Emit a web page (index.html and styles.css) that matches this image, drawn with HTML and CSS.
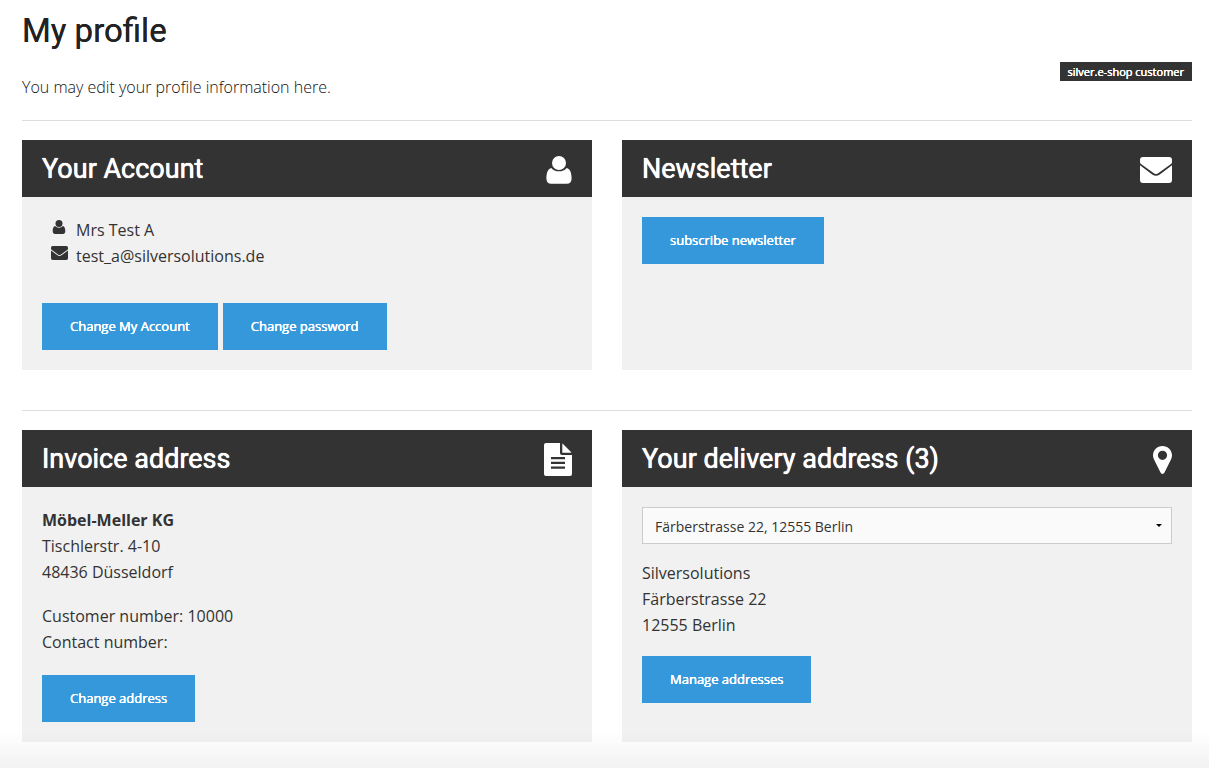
FILE: index.html
```html
<!DOCTYPE html>
<html lang="en">
<head>
<meta charset="utf-8">
<title>My profile</title>
<meta name="viewport" content="width=device-width, initial-scale=1">
<link rel="stylesheet" href="styles.css">
</head>
<body>
<svg class="sprite" aria-hidden="true">
  <symbol id="user" viewBox="0 0 26 28">
    <circle cx="13" cy="7" r="7"/>
    <path d="M5.3 11.9C7 14 9.800 15.300 13 15.300S19 14 20.700 11.900C24.200 12.600 25.600 17 25.600 22.500C25.600 25.800 23.800 27.800 20.800 27.800H5.200C2.200 27.800.4 25.800.4 22.500C.4 17 1.800 12.600 5.300 11.900Z"/>
  </symbol>
  <symbol id="envelope" viewBox="0 0 32 26">
    <path d="M3 0H29Q32 0 32 3V5.200C32 5.900 31.500 6.500 31 6.900L18.800 15.800C16.800 17.400 15.200 17.400 13.200 15.800L1 6.900C.5 6.500 0 5.900 0 5.200V3Q0 0 3 0Z"/>
    <path d="M0 8.300L12.200 17.400C14.800 19.300 17.200 19.300 19.800 17.400L32 8.300V23Q32 26 29 26H3Q0 26 0 23Z"/>
  </symbol>
  <symbol id="file" viewBox="0 0 28 33">
    <path fill-rule="evenodd" d="M2 0H16V10Q16 12 18 12H28V31Q28 33 26 33H2Q0 33 0 31V2Q0 0 2 0ZM7 14V16.200H21V14ZM7 18.700V20.900H21V18.700ZM7 23.500V25.700H21V23.500Z"/>
    <path d="M18.300 .6Q19 .9 19.500 1.400L26.500 8.400Q27 9 27.400 9.700H18.300Z"/>
  </symbol>
  <symbol id="marker" viewBox="0 0 19 28">
    <path fill-rule="evenodd" d="M9.500 0C14.800 0 19 4.200 19 9.300C19 10.800 18.700 12.100 18.100 13.300L11.500 26.600C10.700 28.300 8.300 28.300 7.500 26.600L.9 13.300C.3 12.100 0 10.800 0 9.300C0 4.200 4.200 0 9.500 0ZM9.500 4.700A4.600 4.600 0 1 0 9.500 13.900A4.600 4.600 0 1 0 9.500 4.700Z"/>
  </symbol>
</svg>

<main class="page">
  <header class="intro">
    <div>
      <h1 class="title">My profile</h1>
      <p class="lead">You may edit your profile information here.</p>
    </div>
    <span class="label">silver.e-shop customer</span>
  </header>

  <div class="row">
    <section class="panel">
      <header class="panel-head">
        <h2 class="panel-title">Your Account</h2>
        <svg class="icon-user" aria-hidden="true"><use href="#user"/></svg>
      </header>
      <div class="panel-body">
        <ul class="contact">
          <li class="contact-item"><svg class="contact-icon" viewBox="0 0 17 14" aria-hidden="true"><use href="#user" x="1" y="0" width="14" height="14"/></svg>Mrs Test A</li>
          <li class="contact-item"><svg class="contact-icon" viewBox="0 0 17 14" aria-hidden="true"><use href="#envelope" x="0" y="0" width="17" height="14"/></svg>test_a@silversolutions.de</li>
        </ul>
        <div class="actions">
          <button class="button" type="button">Change My Account</button>
          <button class="button" type="button">Change password</button>
        </div>
      </div>
    </section>
    <section class="panel">
      <header class="panel-head">
        <h2 class="panel-title">Newsletter</h2>
        <svg class="icon-envelope" aria-hidden="true"><use href="#envelope"/></svg>
      </header>
      <div class="panel-body">
        <div class="actions">
          <button class="button" type="button">subscribe newsletter</button>
        </div>
      </div>
    </section>
  </div>

  <div class="row">
    <section class="panel">
      <header class="panel-head">
        <h2 class="panel-title">Invoice address</h2>
        <svg class="icon-file" aria-hidden="true"><use href="#file"/></svg>
      </header>
      <div class="panel-body">
        <p class="text"><strong>Möbel-Meller KG</strong><br>Tischlerstr. 4-10<br>48436 Düsseldorf</p>
        <p class="text numbers">Customer number: 10000<br>Contact number:</p>
        <div class="actions">
          <button class="button" type="button">Change address</button>
        </div>
      </div>
    </section>
    <section class="panel">
      <header class="panel-head">
        <h2 class="panel-title">Your delivery address (3)</h2>
        <svg class="icon-marker" aria-hidden="true"><use href="#marker"/></svg>
      </header>
      <div class="panel-body">
        <div class="picker">
          <select class="select" aria-label="Delivery address">
            <option>Färberstrasse 22, 12555 Berlin</option>
          </select>
          <svg class="picker-arrow" viewBox="0 0 6 3" aria-hidden="true"><path d="M0 0H6L3 3Z"/></svg>
        </div>
        <p class="text">Silversolutions<br>Färberstrasse 22<br>12555 Berlin</p>
        <div class="actions">
          <button class="button" type="button">Manage addresses</button>
        </div>
      </div>
    </section>
  </div>
</main>
<div class="fade"></div>
</body>
</html>
```
FILE: styles.css
```css
* {
  box-sizing: border-box;
}

body {
  margin: 0;
  background: #fff;
  color: #333;
  font: 16px/26px "Open Sans", "Noto Sans", sans-serif;
}

h1, h2, p, ul {
  margin: 0;
  padding: 0;
}

svg {
  fill: currentColor;
  flex: none;
}

.sprite {
  display: none;
}

.page {
  padding: 8px 17px 0 22px;
}

.intro {
  display: flex;
  justify-content: space-between;
  align-items: center;
  padding-bottom: 20px;
}

.title {
  color: #222;
  font: 400 33px/46px Roboto, sans-serif;
  margin-bottom: 20px;
}

.lead {
  color: #111;
  font-weight: 300;
}

/* Zero-offset shadows thicken the regular weight without widening it. */
.title {
  text-shadow: 0 0 currentColor;
}

.label,
.button {
  text-shadow: 0 0 currentColor, 0 0 currentColor;
}

.panel-title {
  text-shadow: 0 0 currentColor, 0 0 1px currentColor;
}

.label {
  margin-top: 34px;
  padding: 0 8px;
  background: #333;
  color: #fff;
  font-size: 11px;
  line-height: 19px;
}

.row {
  display: grid;
  grid-template-columns: 1fr 1fr;
  gap: 30px;
  padding: 19px 0 40px;
  border-top: 1px solid #ddd;
}

.panel {
  background: #f1f1f1;
}

.panel-head {
  display: flex;
  justify-content: space-between;
  align-items: center;
  height: 57px;
  padding: 2px 20px 0;
  background: #333;
  color: #fff;
}

.panel-title {
  font: 400 27px/38px Roboto, sans-serif;
  padding-bottom: 2px;
}

.icon-user {
  width: 26px;
  height: 28px;
}

.icon-envelope {
  width: 32px;
  height: 26px;
}

.icon-file {
  width: 28px;
  height: 33px;
}

.icon-marker {
  width: 19px;
  height: 28px;
}

.panel-body {
  padding: 20px;
}

.contact {
  list-style: none;
  padding: 0 9px;
  margin-bottom: 34px;
}

.contact-item {
  display: flex;
  align-items: center;
  gap: 8px;
}

.contact-icon {
  width: 17px;
  height: 14px;
  margin-bottom: 6px;
}

.text {
  margin-bottom: 18px;
}

.numbers {
  margin-bottom: 20px;
}

.actions {
  display: flex;
  flex-wrap: wrap;
  gap: 5px;
}

.button {
  padding: 0 28px;
  border: 0;
  background: #3498db;
  color: #fff;
  font: 400 13px/47px "Open Sans", sans-serif;
  cursor: pointer;
}

.picker {
  position: relative;
  margin-bottom: 16px;
}

.select {
  display: block;
  width: 100%;
  height: 37px;
  padding: 2px 12px 0;
  border: 1px solid #ccc;
  border-radius: 0;
  background: #fafafa;
  color: #333;
  font: 14px/20px "Open Sans", sans-serif;
  appearance: none;
}

.picker-arrow {
  position: absolute;
  top: 17px;
  right: 10px;
  width: 6px;
  height: 3px;
  color: #000;
  pointer-events: none;
}

.fade {
  position: fixed;
  inset: auto 0 0;
  height: 36px;
  background: linear-gradient(rgba(0, 0, 0, 0), rgba(0, 0, 0, .05));
  pointer-events: none;
}
```
